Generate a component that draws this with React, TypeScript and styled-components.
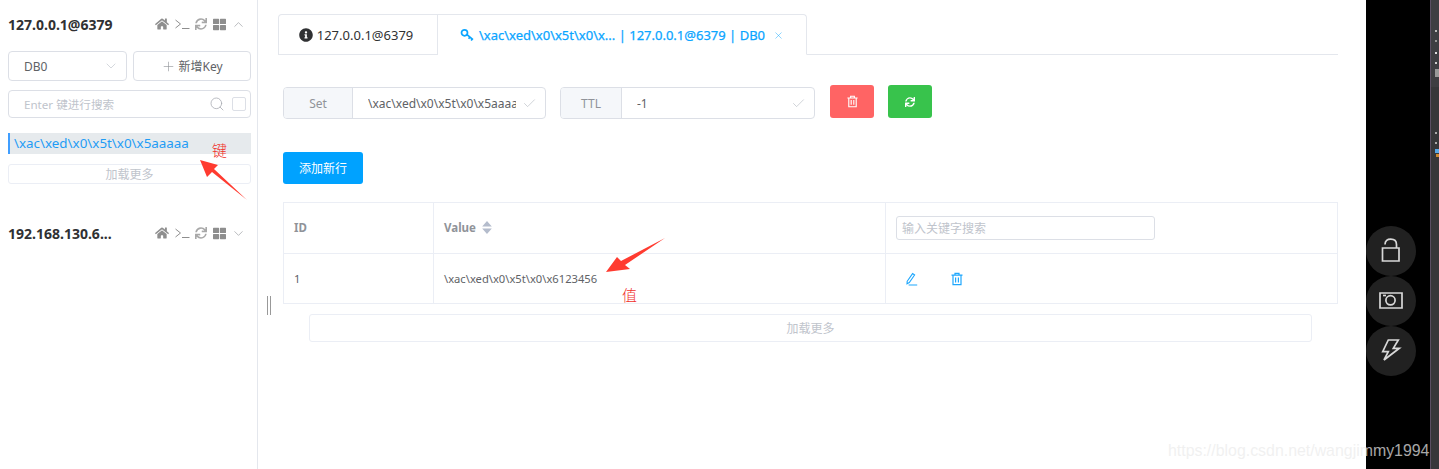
import React from 'react';
import styled, { createGlobalStyle } from 'styled-components';
import { FaHome, FaSync, FaThLarge, FaInfoCircle } from 'react-icons/fa';
import { Plus, Search, ChevronDown, ChevronUp, Check, X } from 'lucide-react';

const Global = createGlobalStyle`
  html, body { margin: 0; padding: 0; background: #fff; }
  body { font-family: "Noto Sans", "Noto Sans CJK SC", sans-serif; }
  * { box-sizing: border-box; }
`;

const Frame = styled.div`
  position: relative;
  display: flex;
  width: 1439px;
  height: 469px;
  overflow: hidden;
  background: #fff;
`;

const Sidebar = styled.aside`
  width: 258px;
  flex: none;
  padding: 0 6px 0 8px;
  border-right: 1px solid #e4e7ed;
`;

const ConnHeader = styled.div<{ $top: number }>`
  display: flex;
  align-items: center;
  justify-content: space-between;
  height: 20px;
  margin-top: ${p => p.$top}px;
`;

const ConnName = styled.div`
  font-size: 14px;
  font-weight: 700;
  color: #303133;
  white-space: nowrap;
`;

const ConnTools = styled.div`
  display: flex;
  align-items: center;
  gap: 5.5px;
  margin-right: 5px;
  color: #8e8e8e;
  svg { display: block; }
`;

const Prompt = styled.svg`
  width: 15px;
  height: 12px;
  fill: none;
  stroke: #8e8e8e;
  stroke-width: 1;
`;

const ToolGap = styled.span`
  display: flex;
  color: ${p => p.color || '#8e8e8e'};
`;

const DbRow = styled.div`
  display: flex;
  gap: 6px;
  margin-top: 17px;
`;

const DbSelect = styled.div`
  width: 119px;
  height: 30px;
  display: flex;
  align-items: center;
  justify-content: space-between;
  padding: 0 7px 0 15px;
  border: 1px solid #dcdfe6;
  border-radius: 4px;
  font-size: 12px;
  color: #606266;
`;

const NewKey = styled.div`
  width: 118px;
  height: 30px;
  display: flex;
  align-items: center;
  justify-content: center;
  gap: 2px;
  border: 1px solid #dcdfe6;
  border-radius: 4px;
  font-size: 12px;
  color: #606266;
`;

const SearchBox = styled.div`
  display: flex;
  align-items: center;
  height: 28px;
  margin-top: 9px;
  padding: 0 4px 0 15px;
  border: 1px solid #dcdfe6;
  border-radius: 4px;
  font-size: 11.6px;
  color: #c0c4cc;
`;

const SearchText = styled.span`
  flex: 1;
`;

const CheckBox = styled.span`
  width: 14px;
  height: 14px;
  margin-left: 7px;
  border: 1px solid #dcdfe6;
  border-radius: 2px;
`;

const KeyRow = styled.div`
  height: 21px;
  margin-top: 15px;
  padding-left: 4px;
  border-left: 2px solid #409eff;
  background: #e6eaed;
  color: #1f9cf5;
  font-size: 13.4px;
  line-height: 21px;
  white-space: nowrap;
`;

const LoadMore = styled.div<{ $h: number; $w?: number; $ml?: number; $mt: number }>`
  height: ${p => p.$h}px;
  width: ${p => (p.$w ? p.$w + 'px' : 'auto')};
  margin: ${p => p.$mt}px 0 0 ${p => p.$ml || 0}px;
  display: flex;
  align-items: center;
  justify-content: center;
  border: 1px solid #ebeef5;
  border-radius: 3px;
  font-size: 12px;
  color: #c0c4cc;
`;

const Main = styled.main`
  position: relative;
  width: 1108px;
  flex: none;
  padding: 14px 0 0 20px;
`;

const TabBar = styled.div`
  display: flex;
  width: 1060px;
  height: 41px;
  border-bottom: 1px solid #e4e7ed;
`;

const Tab = styled.div<{ $active?: boolean; $w: number }>`
  width: ${p => p.$w}px;
  height: ${p => (p.$active ? 41 : 40)}px;
  display: flex;
  align-items: center;
  justify-content: center;
  gap: 4px;
  padding-right: ${p => (p.$active ? 0 : 4)}px;
  border: 1px solid #e4e7ed;
  border-left: ${p => (p.$active ? 'none' : '1px solid #e4e7ed')};
  border-bottom: ${p => (p.$active ? '1px solid #fff' : 'none')};
  border-radius: ${p => (p.$active ? '0 4px 0 0' : '4px 0 0 0')};
  background: #fff;
  font-size: 13px;
  -webkit-text-stroke: ${p => (p.$active ? '0.25px' : '0')};
  color: ${p => (p.$active ? '#0aa5ff' : '#303133')};
  white-space: nowrap;
`;

const CloseWrap = styled.span`
  display: flex;
  margin-left: 4px;
  margin-top: 2px;
`;

const Pane = styled.div`
  padding: 30px 0 0 5px;
`;

const FieldRow = styled.div`
  display: flex;
  align-items: flex-start;
  height: 34px;
`;

const Field = styled.div<{ $w: number; $mr: number }>`
  width: ${p => p.$w}px;
  height: 32px;
  margin: 2px ${p => p.$mr}px 0 0;
  display: flex;
  border: 1px solid #dcdfe6;
  border-radius: 4px;
  overflow: hidden;
  font-size: 12px;
`;

const Prepend = styled.div<{ $w: number }>`
  width: ${p => p.$w}px;
  flex: none;
  display: flex;
  align-items: center;
  justify-content: center;
  background: #f5f7fa;
  border-right: 1px solid #dcdfe6;
  color: #909399;
`;

const FieldValue = styled.div`
  flex: 1;
  display: flex;
  align-items: center;
  gap: 6px;
  padding: 0 8px 0 15px;
  color: #606266;
  min-width: 0;
`;

const FieldText = styled.span`
  flex: 1;
  overflow: hidden;
  white-space: nowrap;
`;

const IconButton = styled.div<{ $bg: string; $mr: number }>`
  width: 44px;
  height: 33px;
  margin-right: ${p => p.$mr}px;
  display: flex;
  align-items: center;
  justify-content: center;
  border-radius: 3px;
  background: ${p => p.$bg};
  color: #fff;
`;

const AddButton = styled.div`
  width: 80px;
  height: 32px;
  margin-top: 33px;
  display: flex;
  align-items: center;
  justify-content: center;
  border-radius: 3px;
  background: #00a2ff;
  color: #fff;
  font-size: 12px;
`;

const Table = styled.div`
  width: 1055px;
  margin-top: 18px;
  border: 1px solid #ebeef5;
  border-bottom: none;
`;

const TableRow = styled.div<{ $h: number }>`
  display: grid;
  grid-template-columns: 150px 452px 1fr;
  height: ${p => p.$h}px;
  border-bottom: 1px solid #ebeef5;
`;

const Cell = styled.div<{ $head?: boolean }>`
  display: flex;
  align-items: center;
  gap: 5px;
  padding: 0 0 ${p => (p.$head ? 2 : 0)}px 10px;
  border-right: 1px solid #ebeef5;
  font-size: ${p => (p.$head ? 11.5 : 11.2)}px;
  font-weight: ${p => (p.$head ? 700 : 400)};
  color: ${p => (p.$head ? '#909399' : '#606266')};
  &:last-child { border-right: none; }
`;

const SortIcon = styled.svg`
  width: 12px;
  height: 15px;
  fill: #b4bccc;
`;

const TableSearch = styled.div`
  width: 259px;
  height: 24px;
  margin-top: 2px;
  display: flex;
  align-items: center;
  padding-left: 5px;
  border: 1px solid #dcdfe6;
  border-radius: 3px;
  font-size: 12px;
  font-weight: 400;
  color: #c0c4cc;
`;

const ActionIcons = styled.div`
  display: flex;
  gap: 31px;
  padding-left: 9px;
  margin-top: 1px;
`;

const Handle = styled.div`
  position: absolute;
  left: 9px;
  top: 296px;
  width: 4px;
  height: 19px;
  border-left: 1px solid #999;
  border-right: 1px solid #999;
`;

const BlackStrip = styled.div`
  width: 64px;
  flex: none;
  display: flex;
  flex-direction: column;
  align-items: flex-start;
  padding-top: 226px;
  background: #000;
`;

const RoundButton = styled.div`
  width: 50px;
  height: 50px;
  flex: none;
  display: flex;
  align-items: center;
  justify-content: center;
  border-radius: 50%;
  background: #212121;
`;

const RoundIcon = styled.svg`
  width: 26px;
  height: 26px;
  fill: none;
  stroke: #d8d8d8;
  stroke-width: 1.7;
`;

const GreyStrip = styled.div`
  flex: 1;
  border-left: 1px solid #5a4f63;
  background: linear-gradient(#3e3e42 0 87px, #37373a 87px);
`;

const StripMark = styled.div<{ $top: number; $c: string; $h?: number; $w?: number }>`
  position: absolute;
  right: ${p => (p.$w ? 0 : 2)}px;
  top: ${p => p.$top}px;
  width: ${p => p.$w || 2}px;
  height: ${p => p.$h || 2}px;
  background: ${p => p.$c};
`;

const Annotation = styled.svg`
  position: absolute;
  left: 0;
  top: 0;
  width: 1439px;
  height: 469px;
  pointer-events: none;
  fill: #ff3b30;
`;

const Note = styled.span<{ $x: number; $y: number }>`
  position: absolute;
  left: ${p => p.$x}px;
  top: ${p => p.$y}px;
  font-size: 15px;
  line-height: 18px;
  font-weight: 300;
  color: #f0302a;
`;

const Watermark = styled.span`
  position: absolute;
  left: 1168px;
  top: 442px;
  font-family: "Liberation Sans", sans-serif;
  font-size: 15.9px;
  line-height: 18px;
  white-space: nowrap;
  color: rgba(235, 235, 235, 0.72);
`;

const TrashIcon = ({ size = 14, color = 'currentColor' }: { size?: number; color?: string }) => (
  <svg width={size} height={size} viewBox="0 0 14 14" fill="none" stroke={color} strokeWidth="1.2">
    <path d="M1.5 3.2h11M5 3V1.4h4V3M3 3.4v9.2h8V3.4M5.6 5.5v5M8.4 5.5v5" />
  </svg>
);

const KeyIcon = () => (
  <svg width="15" height="14" viewBox="0 0 15 14" fill="none" stroke="#0aa5ff" strokeWidth="1.7">
    <circle cx="4.5" cy="4.8" r="3" />
    <path d="M7 6.6l6 5M10 9l-1.4 1.8M12.3 11l-1.2 1.6" />
  </svg>
);

const EditIcon = () => (
  <svg width="14" height="14" viewBox="0 0 14 14" fill="none" stroke="#1ea7fd" strokeWidth="1.1">
    <path d="M2.2 9.2L7.6 1.6l2 1.4-5.3 7.6-2.3 1.2zM3.6 13h8.6" />
  </svg>
);

const App = () => (
  <Frame>
    <Global />
    <Sidebar>
      <ConnHeader $top={14}>
        <ConnName>127.0.0.1@6379</ConnName>
        <ConnTools>
          <FaHome size={14} />
          <Prompt viewBox="0 0 15 12"><path d="M0.5 2l5 4-5 4M7 10.5h7.5" /></Prompt>
          <ToolGap color="#a8a8a8"><FaSync size={12} /></ToolGap>
          <FaThLarge size={13} />
          <ChevronUp size={15} strokeWidth={1} color="#909399" />
        </ConnTools>
      </ConnHeader>
      <DbRow>
        <DbSelect>DB0<ChevronDown size={16} strokeWidth={1} color="#c0c4cc" /></DbSelect>
        <NewKey><Plus size={15} strokeWidth={1} color="#909399" />新增Key</NewKey>
      </DbRow>
      <SearchBox>
        <SearchText>Enter 键进行搜索</SearchText>
        <Search size={16} strokeWidth={1.2} color="#a8abb2" />
        <CheckBox />
      </SearchBox>
      <KeyRow>\xac\xed\x0\x5t\x0\x5aaaaa</KeyRow>
      <LoadMore $h={20} $mt={10}>加载更多</LoadMore>
      <ConnHeader $top={39}>
        <ConnName>192.168.130.6...</ConnName>
        <ConnTools>
          <FaHome size={14} />
          <Prompt viewBox="0 0 15 12"><path d="M0.5 2l5 4-5 4M7 10.5h7.5" /></Prompt>
          <ToolGap color="#a8a8a8"><FaSync size={12} /></ToolGap>
          <FaThLarge size={13} />
          <ChevronDown size={15} strokeWidth={1} color="#909399" />
        </ConnTools>
      </ConnHeader>
    </Sidebar>
    <Main>
      <Handle />
      <TabBar>
        <Tab $w={160}><FaInfoCircle size={14} color="#303133" />127.0.0.1@6379</Tab>
        <Tab $active $w={369}>
          <KeyIcon />
          \xac\xed\x0\x5t\x0\x... | 127.0.0.1@6379 | DB0
          <CloseWrap><X size={11} strokeWidth={1} color="#0aa5ff" /></CloseWrap>
        </Tab>
      </TabBar>
      <Pane>
        <FieldRow>
          <Field $w={263} $mr={14}>
            <Prepend $w={69}>Set</Prepend>
            <FieldValue>
              <FieldText>\xac\xed\x0\x5t\x0\x5aaaaa</FieldText>
              <Check size={15} strokeWidth={1} color="#b4b8c0" />
            </FieldValue>
          </Field>
          <Field $w={255} $mr={15}>
            <Prepend $w={61}>TTL</Prepend>
            <FieldValue>
              <FieldText>-1</FieldText>
              <Check size={15} strokeWidth={1} color="#b4b8c0" />
            </FieldValue>
          </Field>
          <IconButton $bg="#ff6464" $mr={14}><TrashIcon size={13} /></IconButton>
          <IconButton $bg="#38c34c" $mr={0}><FaSync size={10} /></IconButton>
        </FieldRow>
        <AddButton>添加新行</AddButton>
        <Table>
          <TableRow $h={51}>
            <Cell $head>ID</Cell>
            <Cell $head>
              Value
              <SortIcon viewBox="0 0 11 14"><path d="M5.5 1L10 6H1zM5.5 13L1 8h9z" /></SortIcon>
            </Cell>
            <Cell $head><TableSearch>输入关键字搜索</TableSearch></Cell>
          </TableRow>
          <TableRow $h={50}>
            <Cell>1</Cell>
            <Cell>\xac\xed\x0\x5t\x0\x6123456</Cell>
            <Cell>
              <ActionIcons>
                <EditIcon />
                <TrashIcon size={14} color="#1ea7fd" />
              </ActionIcons>
            </Cell>
          </TableRow>
        </Table>
        <LoadMore $h={28} $w={1003} $ml={26} $mt={10}>加载更多</LoadMore>
      </Pane>
    </Main>
    <BlackStrip>
      <RoundButton>
        <RoundIcon viewBox="0 0 26 26"><path d="M4.5 10h16.5v13H4.5zM7 6.5C7 2.8 9.5 1.2 12.7 1.2S18.5 2.8 18.5 6.5V10" /></RoundIcon>
      </RoundButton>
      <RoundButton>
        <RoundIcon viewBox="0 0 26 26"><path d="M2 5h22v15H2z" /><circle cx="12.5" cy="12.3" r="4.6" /><path d="M5 7.5h3" /></RoundIcon>
      </RoundButton>
      <RoundButton>
        <RoundIcon viewBox="0 0 26 26"><path d="M10.3 2h10l-5 8.3h6L6 22l4.3-8.3H4.7z" /></RoundIcon>
      </RoundButton>
    </BlackStrip>
    <GreyStrip />
    <StripMark $top={30} $c="#bbb" />
    <StripMark $top={40} $c="#999" />
    <StripMark $top={52} $c="#ddd" />
    <StripMark $top={62} $c="#ccc" />
    <StripMark $top={69} $c="#999" $h={8} $w={4} />
    <StripMark $top={132} $c="#aaa" />
    <StripMark $top={142} $c="#aaa" />
    <StripMark $top={149} $c="#5aa9e6" $h={4} $w={4} />
    <StripMark $top={154} $c="#d08a2e" $h={3} $w={3} />
    <Annotation viewBox="0 0 1439 469">
      <polygon points="200,160 218,165 214,169 247,200 212,172 207,177" />
      <polygon points="606,272 617,257 621,261 665,238 625,265 630,269" />
    </Annotation>
    <Note $x={212} $y={141}>键</Note>
    <Note $x={622} $y={286}>值</Note>
    <Watermark>https://blog.csdn.net/wangjimmy1994</Watermark>
  </Frame>
);

export default App;
